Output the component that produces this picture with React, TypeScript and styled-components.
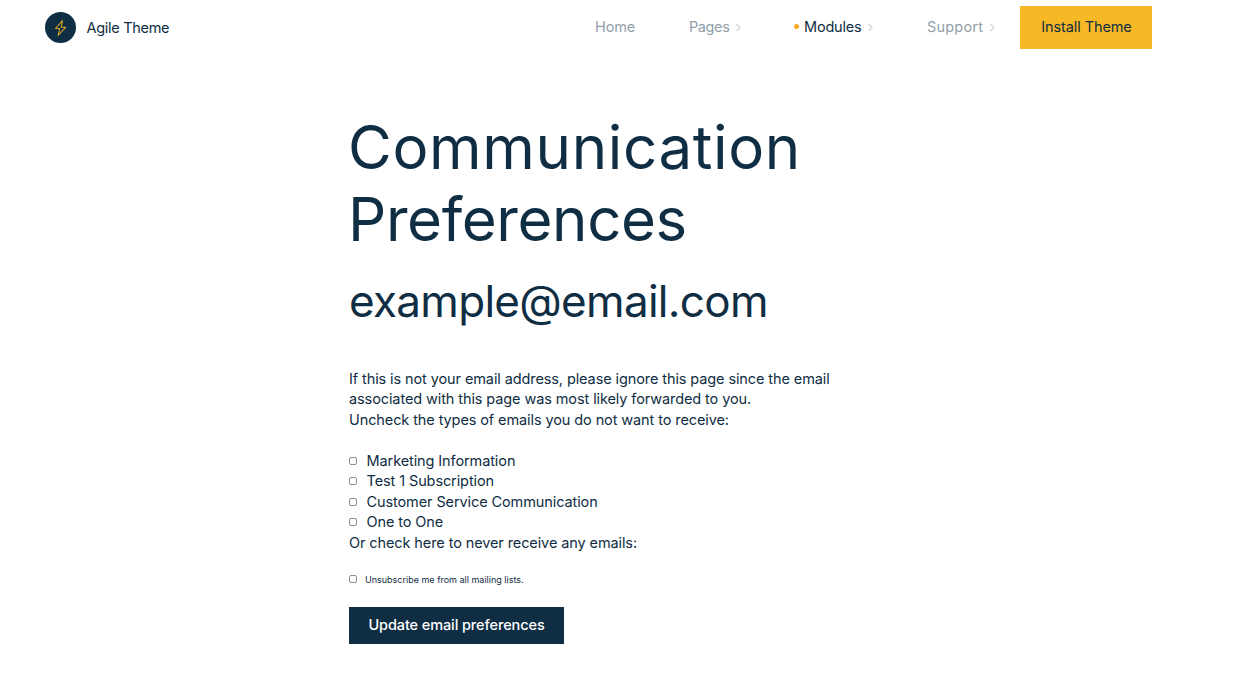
import React from 'react';
import styled, { createGlobalStyle } from 'styled-components';

const GlobalStyle = createGlobalStyle`
  html, body {
    margin: 0;
    padding: 0;
    background: #fff;
    font-family: 'Inter', 'Liberation Sans', sans-serif;
    color: #0f2d43;
  }
`;

const Header = styled.header`
  display: flex;
  align-items: center;
  justify-content: space-between;
  height: 43px;
  padding: 6px 96px 6px 45px;
`;

const Brand = styled.a`
  display: flex;
  align-items: center;
  gap: 10.5px;
  font-size: 14.5px;
  letter-spacing: -0.3px;
  color: #0f2d43;
`;

const BrandMark = styled.span`
  display: flex;
  align-items: center;
  justify-content: center;
  width: 31px;
  height: 31px;
  border-radius: 50%;
  background: #0f2d43;
`;

const Nav = styled.nav`
  display: flex;
  align-items: center;
`;

const NavItem = styled.a<{ $width: number; $active?: boolean; $tracking?: number }>`
  display: flex;
  align-items: center;
  width: ${(p) => p.$width}px;
  padding-bottom: 2px;
  font-size: 14.5px;
  letter-spacing: ${(p) => p.$tracking ?? -0.1}px;
  color: ${(p) => (p.$active ? '#0f2d43' : '#929fa9')};
`;

const Dot = styled.span`
  width: 5px;
  height: 5px;
  margin-right: 5px;
  border-radius: 50%;
  background: #f7a825;
`;

const Chevron = styled.svg`
  width: 7px;
  height: 9px;
  margin-left: 6px;
  margin-top: 2px;
  fill: none;
  stroke: #a9b3ba;
  stroke-width: 1;
`;

const InstallButton = styled.a`
  display: flex;
  align-items: center;
  justify-content: center;
  box-sizing: border-box;
  width: 132px;
  height: 43px;
  padding: 0 0 2px 1px;
  background: #f7b825;
  font-size: 14.5px;
  letter-spacing: -0.1px;
  color: #0f2d43;
`;

const Main = styled.main`
  width: 500px;
  margin-left: 349px;
  padding-top: 56px;
`;

const Title = styled.h1`
  margin: 0 0 0 -1px;
  font-size: 60px;
  font-weight: 400;
  line-height: 72px;
`;

const TitleLine = styled.span<{ $tracking: number }>`
  display: block;
  letter-spacing: ${(p) => p.$tracking}px;
`;

const Email = styled.h2`
  margin: 19px 0 0;
  font-size: 44px;
  font-weight: 400;
  line-height: 54px;
  letter-spacing: -0.7px;
`;

const Copy = styled.p`
  margin: 40.5px 0 0;
  font-size: 14.5px;
  line-height: 20.5px;
  letter-spacing: -0.1px;
`;

const CheckList = styled.div`
  display: flex;
  flex-direction: column;
  margin-top: 20px;
`;

const CheckRow = styled.label`
  display: flex;
  align-items: center;
  height: 20.5px;
  font-size: 14.5px;
  letter-spacing: -0.1px;
`;

const Box = styled.input.attrs({ type: 'checkbox' })`
  appearance: none;
  box-sizing: border-box;
  width: 8px;
  height: 8px;
  margin: 1px 9.5px 0 0;
  border: 1px solid #8d8d8d;
  border-radius: 2px;
  background: #fff;
`;

const OptOutLabel = styled.div`
  margin-top: 0.5px;
  font-size: 14.5px;
  line-height: 20.5px;
  letter-spacing: -0.1px;
`;

const OptOutRow = styled.label`
  display: flex;
  align-items: center;
  margin-top: 18.5px;
  height: 16px;
  font-size: 9px;
  color: #0f2d43;
`;

const OptOutBox = styled(Box)`
  margin: -2px 8px 0 0;
`;

const SubmitButton = styled.button`
  display: block;
  width: 215px;
  height: 37px;
  margin-top: 19.5px;
  padding: 0 0 2px;
  border: 0;
  background: #0f2d43;
  color: #fff;
  font-family: inherit;
  font-size: 14.5px;
  font-weight: 500;
  letter-spacing: -0.1px;
`;

const Caret = () => (
  <Chevron viewBox="0 0 7 9">
    <path d="M1.5 1l3.5 3.5L1.5 8" />
  </Chevron>
);

const OPTIONS = [
  'Marketing Information',
  'Test 1 Subscription',
  'Customer Service Communication',
  'One to One',
];

const App = () => (
  <>
    <GlobalStyle />
    <Header>
      <Brand>
        <BrandMark>
          <svg width="31" height="31" viewBox="0 0 31 31" fill="none" stroke="#dba627" strokeWidth="1.1" strokeLinejoin="round">
            <path d="M17.5 8.5 10.5 16.5h4.2L13.2 23.5l7.3-8.2h-4.3l1.3-6.8z" />
          </svg>
        </BrandMark>
        Agile Theme
      </Brand>
      <Nav>
        <NavItem $width={94}>Home</NavItem>
        <NavItem $width={105} $tracking={-0.4}>Pages<Caret /></NavItem>
        <NavItem $width={133} $active $tracking={-0.2}>
          <Dot />
          Modules
          <Caret />
        </NavItem>
        <NavItem $width={93} $tracking={0.2}>Support<Caret /></NavItem>
        <InstallButton>Install Theme</InstallButton>
      </Nav>
    </Header>
    <Main>
      <Title>
        <TitleLine $tracking={0.65}>Communication</TitleLine>
        <TitleLine $tracking={-0.4}>Preferences</TitleLine>
      </Title>
      <Email>example@email.com</Email>
      <Copy>
        If this is not your email address, please ignore this page since the email
        associated with this page was most likely forwarded to you.
        <br />
        Uncheck the types of emails you do not want to receive:
      </Copy>
      <CheckList>
        {OPTIONS.map((option) => (
          <CheckRow key={option}>
            <Box />
            {option}
          </CheckRow>
        ))}
      </CheckList>
      <OptOutLabel>Or check here to never receive any emails:</OptOutLabel>
      <OptOutRow>
        <OptOutBox />
        Unsubscribe me from all mailing lists.
      </OptOutRow>
      <SubmitButton>Update email preferences</SubmitButton>
    </Main>
  </>
);

export default App;
